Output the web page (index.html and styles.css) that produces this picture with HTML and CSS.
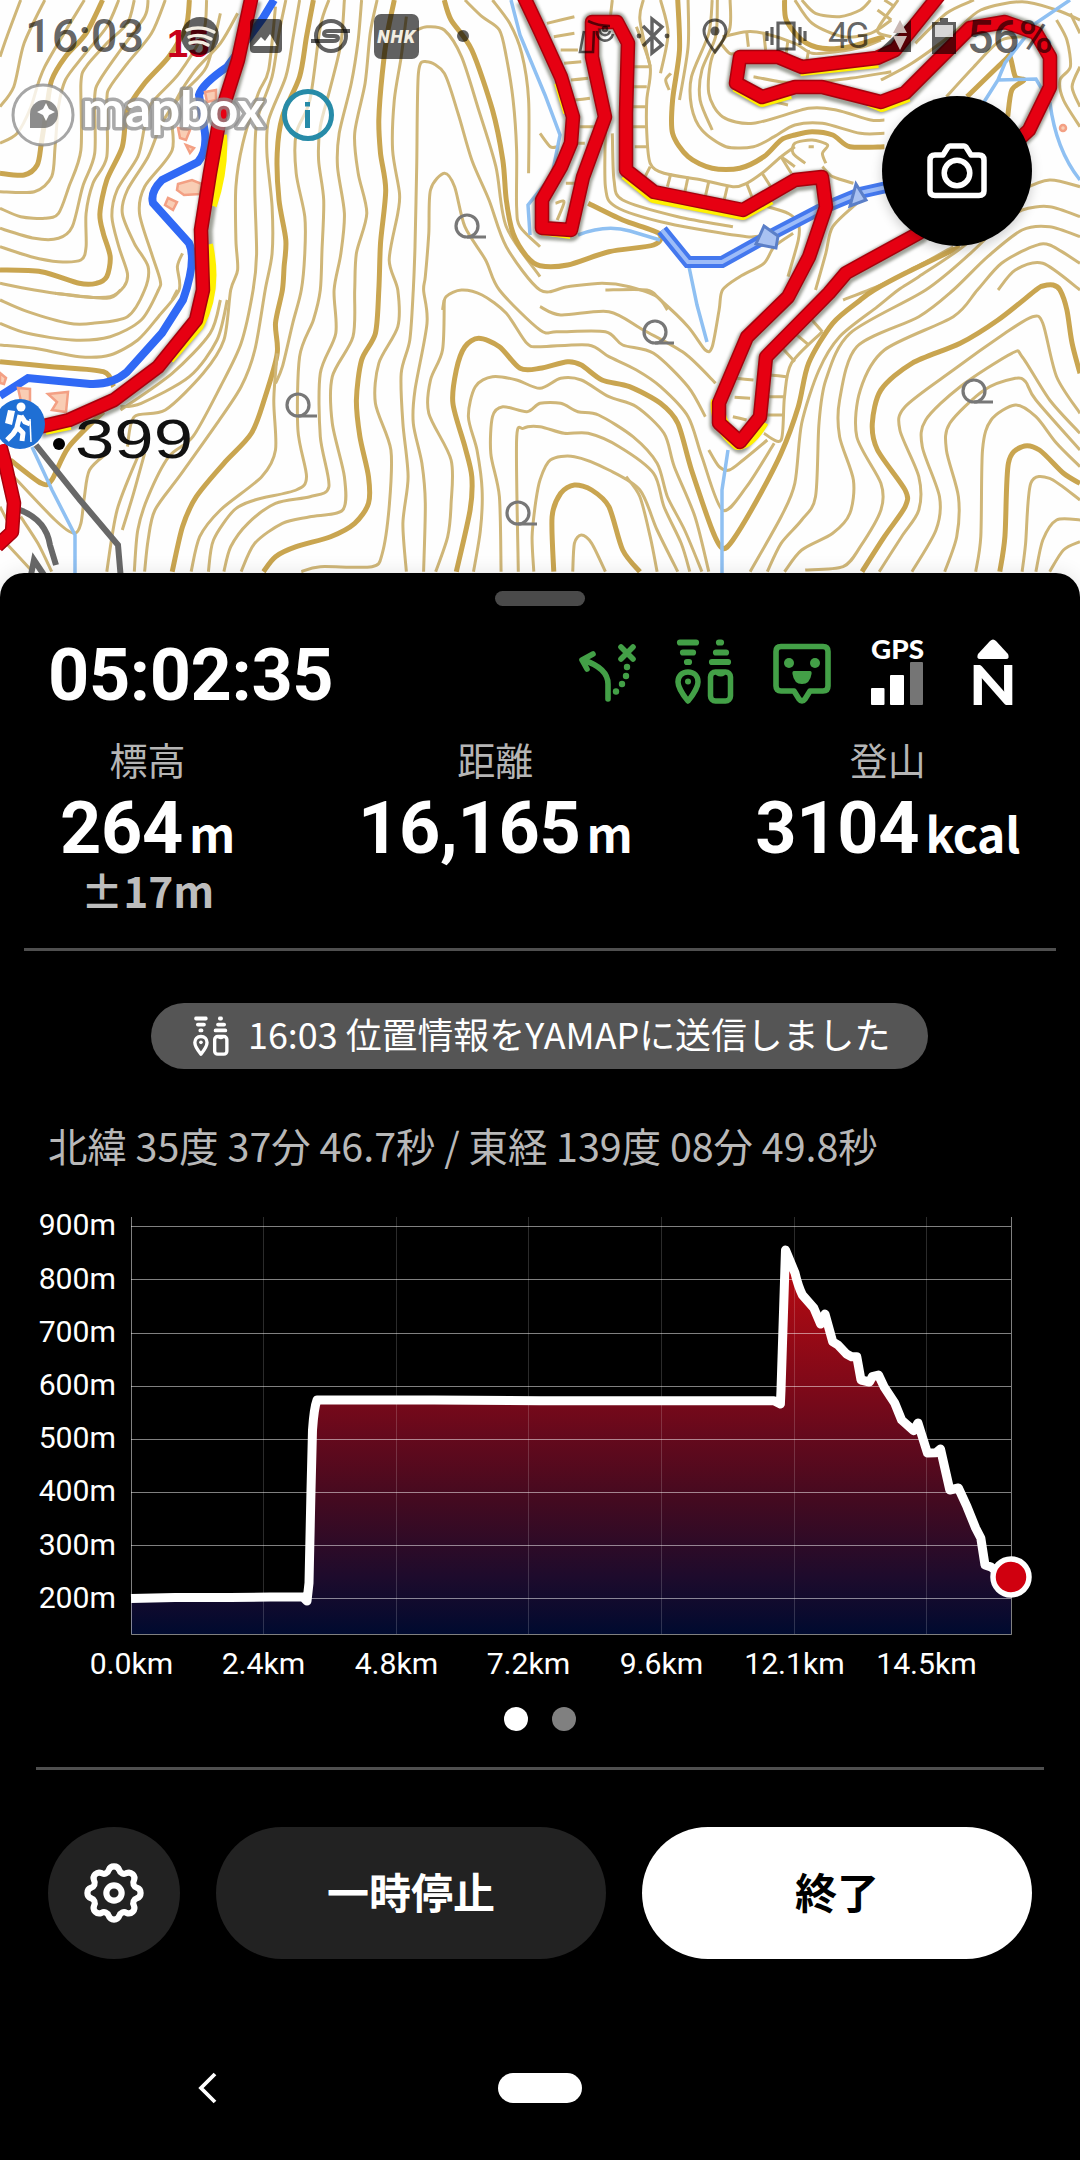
FILE: index.html
```html
<!doctype html>
<html lang="ja">
  <head>
    <meta charset="utf-8">
    <meta name="viewport" content="width=device-width, initial-scale=1.0">
    <title>YAMAP 活動中</title>
    <link rel="stylesheet" href="styles.css">
  </head>
  <body>
    <div class="app">
      <!-- Map -->
      <div class="map">
        <svg class="map-canvas" viewBox="0 0 1080 600">
          <g id="contours"></g>

          <!-- rivers -->
          <g class="stream">
            <path d="M511 0L520 35L545 95L560 135L552 175L528 205L530 235"></path>
            <path d="M578 235Q606 224 630 231L660 240"></path>
            <path d="M688 262L697 305L707 342"></path>
            <path d="M728 450L722 490V575"></path>
            <path d="M1070 0L1036 23L1005 63L998 80L984 102M998 80L1036 79L1050 103Q1056 150 1080 180"></path>
            <path d="M32 447L52 490L75 535V575"></path>
          </g>
          <path class="river" d="M274 0L263 18L227 67Q202 84 199 95L205 133Q207 152 198 162L162 180Q150 192 153 203L189 243Q197 260 183 300L162 333L127 372Q112 385 90 384L28 378L0 396"></path>
          <path class="river-wide" d="M662 230L688 262H722L767 237L819 210L860 193L900 184"></path>
          <path class="river-fill" d="M662 230L688 262H722L767 237L819 210L860 193L900 184"></path>
          <path class="river-gate" d="M764 226L778 236L776 248L756 244ZM856 184L866 200L850 206Z"></path>

          <!-- buildings -->
          <g class="building">
            <path d="M178 128L190 130L186 140L180 138ZM186 145L194 148L190 153ZM178 184L192 180L202 184L200 194L184 195L177 190ZM168 198L177 202L173 210L165 205ZM205 92L216 90V100L207 102Z"></path>
            <path d="M0 373L6 378L4 384L0 383ZM18 388L30 389V402L22 406ZM48 394L68 392L66 412L52 410L57 402Z"></path>
            <circle cx="1063" cy="128" r="3"></circle>
          </g>

          <!-- roads -->
          <path class="road" d="M36 445L80 500L118 545L121 580M20 510Q46 520 50 545L56 565M30 580L34 560L46 578"></path>

          <!-- trail casing -->
          <g class="casing">
            <path d="M252 0L238 60L221 120L212 173L203 230L205 285L197 322L158 369L114 402L69 422L40 429"></path>
            <path d="M525 0L540 33L561 79L573 119L571 145L561 169L542 202V230L571 232L583 179L605 119L592 57V22H617L628 43L626 113V172L654 194L743 212L795 182L822 179L826 209L809 259L788 299L747 339L719 405V425L740 444L760 419L766 359L829 295L846 275L919 235L1029 130L1050 87V57L1036 33L1005 22L970 28L905 95L881 104L822 89H795L762 99L736 85L740 59H778L802 69L877 60L895 52L936 0"></path>
          </g>
          <g class="yellow">
            <path d="M220 135Q222 170 210 205M206 245Q216 290 197 325L168 358M45 428L70 423"></path>
            <path d="M542 228L571 232M626 173L654 196L743 213L770 198M736 85L762 100L790 92M870 100L882 105L908 95M800 69L878 61M718 400Q715 424 738 443Q750 442 762 421M570 112L561 82"></path>
          </g>
          <g class="trail-edge">
            <path d="M252 -5L238 60L220 117L210 173L201 230L203 290L196 320L158 367L114 400L69 420L35 428"></path>
            <path d="M0 445L5 463L14 503L12 532L-3 546"></path>
            <path d="M523 -5L540 31L561 77L573 117L571 143L561 167L542 200V228L571 230L583 177L605 117L592 57V22H617L628 43L626 113V170L654 192L743 210L795 180L822 177L826 207L809 257L788 297L747 337L719 403V423L740 442L760 417L766 357L829 293L846 273L919 233L1029 130L1050 87V57L1036 33L1005 22L970 28L905 93L881 102L822 87H795L762 97L736 83L740 57H778L802 67L877 58L895 50L940 -6"></path>
          </g>
          <g class="trail">
            <path d="M252 -5L238 60L220 117L210 173L201 230L203 290L196 320L158 367L114 400L69 420L35 428"></path>
            <path d="M0 445L5 463L14 503L12 532L-3 546"></path>
            <path d="M523 -5L540 31L561 77L573 117L571 143L561 167L542 200V228L571 230L583 177L605 117L592 57V22H617L628 43L626 113V170L654 192L743 210L795 180L822 177L826 207L809 257L788 297L747 337L719 403V423L740 442L760 417L766 357L829 293L846 273L919 233L1029 130L1050 87V57L1036 33L1005 22L970 28L905 93L881 102L822 87H795L762 97L736 83L740 57H778L802 67L877 58L895 50L940 -6"></path>
          </g>

          <!-- broadleaf symbols -->
          <g class="tree">
            <path d="M467 237h19M298 416h19M518 524h19M655 343h19M974 402h19"></path>
            <circle cx="467" cy="226" r="11"></circle>
            <circle cx="298" cy="405" r="11"></circle>
            <circle cx="518" cy="513" r="11"></circle>
            <circle cx="655" cy="332" r="11"></circle>
            <circle cx="974" cy="391" r="11"></circle>
          </g>

          <circle cx="59" cy="444" r="6"></circle>
          <text class="spot" x="75" y="458" textLength="118" lengthAdjust="spacingAndGlyphs">399</text>
          <text class="day" x="167" y="57">15</text>

          <!-- trailhead marker -->
          <g transform="translate(20 424)">
            <circle r="25" fill="#1f6fd4"></circle>
            <circle cx="1" cy="-17" r="4.5" fill="#fff"></circle>
            <path d="M-12 -14L-5 -13L-8 1L-15 -1Z" fill="#fff"></path>
            <path d="M0 -9L-3 3L3 9L2 17M-3 4L-7 10L-13 16M1 -8L5 -2L10 0" fill="none" stroke="#fff" stroke-width="5" stroke-linejoin="round"></path>
            <path d="M10 -5L11 18" stroke="#fff" stroke-width="1.5"></path>
          </g>
        </svg>

        <!-- Status bar -->
        <div class="status-bar">
          <span class="clock">16:03</span>
          <svg class="st-music" width="38" height="40" viewBox="0 0 38 40">
            <circle cx="19" cy="20" r="19" fill="currentColor"></circle>
            <path d="M6 14Q19 9 33 16M8 21Q19 17 30 23M9 27Q19 24 27 29" fill="none" stroke="#f3eee2" stroke-width="3.4" stroke-linecap="round"></path>
          </svg>
          <svg class="st-photo" width="32" height="34" viewBox="0 0 32 34">
            <path fill="currentColor" fill-rule="evenodd" d="M4 0H28Q32 0 32 4V30Q32 34 28 34H4Q0 34 0 30V4Q0 0 4 0ZM3 27H27L20 15L15 22L11 18Z"></path>
          </svg>
          <svg class="st-s" width="40" height="34" viewBox="0 0 40 34">
            <g fill="none" stroke="currentColor" stroke-width="4">
              <circle cx="20" cy="17" r="15"></circle>
              <path d="M39 12H18Q13 12 13 15Q13 17 18 17H23Q27 17 27 19Q27 22 22 22H0"></path>
            </g>
          </svg>
          <span class="st-nhk">NHK</span>
          <span class="st-dot"></span>
          <svg class="st-cast" width="38" height="38" viewBox="0 0 38 38">
            <g fill="none" stroke="currentColor" stroke-width="2.6">
              <path d="M6 14L2 35H15L16 14M10 4Q20 9 32 9M19 14a8 8 0 0 0 16 3M22 12a5 5 0 0 0 10 2"></path>
              <circle cx="27" cy="12" r="2"></circle>
            </g>
          </svg>
          <svg class="st-bt" width="34" height="38" viewBox="0 0 34 38">
            <path d="M7 9L26 28L16 36V2L26 10L7 29" fill="none" stroke="currentColor" stroke-width="3.4"></path>
            <circle cx="3" cy="19" r="2.4" fill="currentColor"></circle>
            <circle cx="31" cy="19" r="2.4" fill="currentColor"></circle>
          </svg>
          <svg class="st-pin" width="26" height="36" viewBox="0 0 26 36">
            <path d="M13 2C6.500 2 2 7 2 13C2 21 13 34 13 34C13 34 24 21 24 13C24 7 19.500 2 13 2Z" fill="none" stroke="currentColor" stroke-width="3"></path>
            <circle cx="13" cy="13" r="4.500" fill="currentColor"></circle>
          </svg>
          <svg class="st-vib" width="42" height="30" viewBox="0 0 42 30">
            <path d="M13 2H29V28H13ZM2 10V20M7 6V24M35 6V24M40 10V20" fill="none" stroke="currentColor" stroke-width="3.200"></path>
          </svg>
          <span class="st-net">4G</span>
          <svg class="st-signal" width="34" height="32" viewBox="0 0 34 32">
            <path d="M34 0V32H0Z" fill="currentColor"></path>
            <path d="M23 0L30 13H16ZM23 30L30 16H16Z" fill="#c9b8b4"></path>
          </svg>
          <svg class="st-battery" width="24" height="36" viewBox="0 0 24 36">
            <path d="M8 0H16V4H24V36H0V4H8Z" fill="currentColor"></path>
            <path d="M3 7H21V19H3Z" fill="#fff" fill-opacity=".75"></path>
          </svg>
          <span class="percent">56%</span>
        </div>

        <!-- Attribution -->
        <div class="attribution">
          <svg width="255" height="66" viewBox="0 0 255 66">
            <circle cx="31" cy="33" r="30" fill="#fff" fill-opacity=".8" stroke="#888" stroke-opacity=".75" stroke-width="3"></circle>
            <path d="M18 46V32a14 14 0 1 1 15 14Z" fill="#666" fill-opacity=".75"></path>
            <path d="M34 21L37 27L43 30L37 33L34 39L31 33L25 30L31 27Z" fill="#fff"></path>
            <text class="logo-text" x="70" y="45" textLength="182" lengthAdjust="spacingAndGlyphs">mapbox</text>
          </svg>
          <svg class="info" width="52" height="52" viewBox="0 0 52 52">
            <circle cx="26" cy="26" r="23.500" fill="#fff" fill-opacity=".6" stroke="#278ba8" stroke-width="5"></circle>
            <path d="M23 13H28V17.500H23ZM23 21H28V39H23Z" fill="#278ba8"></path>
          </svg>
        </div>

        <button class="camera" aria-label="カメラ">
          <svg width="60" height="56" viewBox="0 0 60 56">
            <g fill="none" stroke="#fff" stroke-width="5.500" stroke-linejoin="round">
              <path d="M8 12H16L21 4Q22 3 23 3H37Q38 3 39 4L44 12H52Q57 12 57 17V48Q57 52.500 52 52.500H8Q3 52.500 3 48V17Q3 12 8 12Z"></path>
              <circle cx="30" cy="30" r="12.800"></circle>
            </g>
          </svg>
        </button>
      </div>

      <!-- Bottom sheet -->
      <div class="sheet">
        <div class="handle"></div>

        <div class="head">
          <div class="timer">05:02:35</div>
          <div class="indicators">
            <svg width="58" height="66" viewBox="0 0 58 66">
              <g fill="none" stroke="#43a047" stroke-width="5.600" stroke-linecap="round" stroke-linejoin="round">
                <path d="M29 60V45Q29 29 4 21M14 15L3 21L8 30M42 8L54 20M54 8L42 20"></path>
              </g>
              <g fill="#43a047"><circle cx="48" cy="28" r="3.200"></circle><circle cx="47" cy="37" r="3.200"></circle><circle cx="43" cy="45" r="3.200"></circle><circle cx="37" cy="52.500" r="3.200"></circle></g>
            </svg>
            <svg class="green" width="60" height="66" viewBox="0 0 60 66">
              <g id="send">
                <path d="M5 3.500H21M8 13.500H18M12 23H14M44 3.500H46M41 13.500H51M37 23H53" fill="none" stroke="currentColor" stroke-width="6.200" stroke-linecap="round"></path>
                <path d="M13 33C7 33 3 37 3 43C3 50 13 62 13 62C13 62 23 50 23 43C23 37 19 33 13 33Z" fill="none" stroke="currentColor" stroke-width="5.500" stroke-linejoin="round"></path>
                <circle cx="13" cy="42.500" r="3" fill="currentColor"></circle>
                <rect x="35.500" y="33" width="20" height="29" rx="5" fill="none" stroke="currentColor" stroke-width="5.500"></rect>
                <path d="M41 33H50V36Q46 39 41 36Z" fill="currentColor"></path>
              </g>
            </svg>
            <svg width="58" height="66" viewBox="0 0 58 66">
              <path d="M8 7.500H50Q55 7.500 55 12.500V47Q55 52 50 52H37L32 60Q29 64 26 60L21 52H8Q3 52 3 47V12.500Q3 7.500 8 7.500Z" fill="none" stroke="#43a047" stroke-width="5.600" stroke-linejoin="round"></path>
              <g fill="#43a047"><circle cx="16" cy="24" r="5"></circle><circle cx="42" cy="24" r="5"></circle><path d="M21 32H37Q39 32 38.500 35Q37 45 29 45Q21 45 19.500 35Q19 32 21 32Z"></path></g>
            </svg>
            <svg width="54" height="66" viewBox="0 0 54 66">
              <text class="gps" x="0" y="19.500" textLength="53" lengthAdjust="spacingAndGlyphs">GPS</text>
              <rect x="0" y="49" width="13.500" height="17" rx="1" fill="#fff"></rect>
              <rect x="19" y="36" width="14" height="30" rx="1" fill="#fff"></rect>
              <rect x="39" y="23" width="13" height="43" rx="1" fill="#757575"></rect>
            </svg>
            <svg width="42" height="66" viewBox="0 0 42 66">
              <path d="M18 2Q21 -1 24 2L36 15Q38 20 34 20H8Q4 20 6 15Z" fill="#fff"></path>
              <text class="north" x="-3" y="65.500" textLength="48" lengthAdjust="spacingAndGlyphs">N</text>
            </svg>
          </div>
        </div>

        <div class="stats">
          <div class="stat">
            <div class="label">標高</div>
            <div class="value">264<span>m</span></div>
            <div class="error">±17m</div>
          </div>
          <div class="stat">
            <div class="label">距離</div>
            <div class="value">16,165<span>m</span></div>
          </div>
          <div class="stat">
            <div class="label">登山</div>
            <div class="value">3104<span>kcal</span></div>
          </div>
        </div>

        <div class="divider wide"></div>

        <div class="notice">
          <svg width="36" height="41" viewBox="0 0 59 66"><use href="#send" stroke-width="7"></use></svg>
          <span>16:03 位置情報をYAMAPに送信しました</span>
        </div>

        <div class="coords">北緯 35度 37分 46.7秒 / 東経 139度 08分 49.8秒</div>

        <!-- Elevation chart -->
        <svg class="chart" viewBox="0 1200 1080 490">
          <defs>
            <linearGradient id="elev" gradientUnits="userSpaceOnUse" x1="0" y1="1250" x2="0" y2="1634">
              <stop offset="0" stop-color="#c00a10"></stop>
              <stop offset=".4" stop-color="#76091a"></stop>
              <stop offset=".65" stop-color="#440a20"></stop>
              <stop offset=".85" stop-color="#1e0b2c"></stop>
              <stop offset="1" stop-color="#000a2f"></stop>
            </linearGradient>
          </defs>
          <path fill="url(#elev)" d="M131 1599L306 1597L309 1583L311 1490L312.500 1430L316 1400H774L781 1395L785.500 1250L795 1273L802.400 1295L813.800 1308L820.600 1324L825 1314L832.700 1341L838 1345L846.500 1354L856.800 1357L861 1380L869.500 1382L878.500 1375L884 1387L894.700 1403L901.600 1420L913.600 1431L918 1423L927.400 1453L940.500 1449L949.800 1490L958.400 1488L967 1507L975.600 1528L980.800 1538L985 1565L1011 1577V1634H131Z"></path>
          <path class="grid-v" d="M263.500 1217V1634M396.500 1217V1634M528.500 1217V1634M661.500 1217V1634M794.500 1217V1634M926.500 1217V1634"></path>
          <path class="grid-h" d="M131 1226.500H1011M131 1279.500H1011M131 1333.500H1011M131 1386.500H1011M131 1439.500H1011M131 1492.500H1011M131 1545.500H1011M131 1598.500H1011M131.500 1217V1634.500H1011.500V1217"></path>
          <path class="line" d="M131 1598.500L175 1597.500L230 1597.500L270 1597L303 1597L307 1601L309 1583L311 1490L312.500 1430Q314 1408 317 1400H434L540 1400.700H774L780.400 1404L781 1390L785.500 1250L795 1273Q798 1286 802.400 1295L813.800 1308L820.600 1324L825 1314L832.700 1341.700L838 1345L846.500 1354L851.600 1356.700H856.800L861 1380L869.500 1382L872.300 1376.700L878.500 1375L884 1386.700L894.700 1403L901.600 1420L913.600 1430.700L918 1423L927.400 1453L936 1452.700L940.500 1449L949.800 1490L958.400 1488L967 1506.700L975.600 1528L980.800 1538L985 1565L991 1567L1001.400 1575L1011 1577"></path>
          <circle cx="1011" cy="1577" r="18" fill="#d0000f" stroke="#fff" stroke-width="5.500"></circle>
          <g class="y-labels">
            <text x="116" y="1235">900m</text>
            <text x="116" y="1289">800m</text>
            <text x="116" y="1342">700m</text>
            <text x="116" y="1395">600m</text>
            <text x="116" y="1448">500m</text>
            <text x="116" y="1501">400m</text>
            <text x="116" y="1555">300m</text>
            <text x="116" y="1608">200m</text>
          </g>
          <g class="x-labels">
            <text x="131.500" y="1674">0.0km</text>
            <text x="263.500" y="1674">2.4km</text>
            <text x="396.500" y="1674">4.8km</text>
            <text x="528.500" y="1674">7.2km</text>
            <text x="661.500" y="1674">9.6km</text>
            <text x="794.500" y="1674">12.1km</text>
            <text x="926.500" y="1674">14.5km</text>
          </g>
        </svg>

        <div class="pager">
          <span class="dot active"></span>
          <span class="dot"></span>
        </div>

        <div class="divider"></div>

        <div class="actions">
          <button class="btn settings" aria-label="設定">
            <svg width="68" height="68" viewBox="-32 -32 64 64">
              <g fill="none" stroke="#fff" stroke-width="5.800" stroke-linejoin="round">
                <path d="M-5 -21.500A5.300 5.300 0 0 1 5 -21.500A4.600 4.600 0 0 0 11.700 -18.700A5.300 5.300 0 0 1 18.700 -11.700A4.600 4.600 0 0 0 21.500 -5A5.300 5.300 0 0 1 21.500 5A4.600 4.600 0 0 0 18.700 11.700A5.300 5.300 0 0 1 11.700 18.700A4.600 4.600 0 0 0 5 21.500A5.300 5.300 0 0 1 -5 21.500A4.600 4.600 0 0 0 -11.700 18.700A5.300 5.300 0 0 1 -18.700 11.700A4.600 4.600 0 0 0 -21.500 5A5.300 5.300 0 0 1 -21.500 -5A4.600 4.600 0 0 0 -18.700 -11.700A5.300 5.300 0 0 1 -11.700 -18.700A4.600 4.600 0 0 0 -5 -21.500Z"></path>
                <circle r="7.200"></circle>
              </g>
            </svg>
          </button>
          <button class="btn pause">一時停止</button>
          <button class="btn finish">終了</button>
        </div>

        <!-- System navigation -->
        <div class="nav-bar">
          <svg width="20" height="32" viewBox="0 0 20 32">
            <path d="M17 2L3 16L17 30" fill="none" stroke="#fff" stroke-width="3.800"></path>
          </svg>
          <span class="home"></span>
        </div>
      </div>
    </div>

    <script src="map.js"></script>
  </body>
</html>
```

FILE: styles.css
```css
* {
  margin: 0;
  padding: 0;
  box-sizing: border-box;
}

body {
  background: #000;
  color: #fff;
  font-family: Roboto, 'Noto Sans CJK JP', sans-serif;
}

svg {
  display: block;
  flex-shrink: 0;
  overflow: visible;
}

button {
  border: none;
  font-family: inherit;
}

.app {
  width: 1080px;
  height: 2160px;
  overflow: hidden;
}

/* Map */
.map {
  position: relative;
  height: 573px;
  background: #fefefe;
}

.map-canvas {
  width: 1080px;
  height: 600px;
  background: #fefefe;
  overflow: hidden;
}

.contour {
  fill: none;
  stroke: #cfb678;
  stroke-width: 3;
}

.contour.index {
  stroke: #c9a550;
  stroke-width: 5;
}

.stream {
  fill: none;
  stroke: #8fc0f2;
  stroke-width: 3.5;
}

.river {
  fill: none;
  stroke: #3069f5;
  stroke-width: 8;
}

.river-wide {
  fill: none;
  stroke: #4478ee;
  stroke-width: 12;
}

.river-fill {
  fill: none;
  stroke: #9dbcf8;
  stroke-width: 4;
}

.river-gate {
  fill: #a9c2f2;
  stroke: #5b7fc8;
  stroke-width: 3;
}

.building {
  fill: #f9cdb4;
  stroke: #f3a084;
  stroke-width: 2.5;
}

.road {
  fill: none;
  stroke: #686868;
  stroke-width: 6;
}

.casing,
.yellow,
.trail,
.trail-edge {
  fill: none;
  stroke-linejoin: round;
}

.casing {
  stroke: #5f6455;
  stroke-opacity: .6;
  stroke-width: 19;
  filter: blur(1.5px);
}

.yellow {
  stroke: #fff000;
  stroke-width: 14;
}

.trail-edge {
  stroke: #a8000c;
  stroke-width: 14.5;
}

.trail {
  stroke: #e60012;
  stroke-width: 11.5;
}

.tree {
  fill: none;
  stroke: #777;
  stroke-width: 3.2;
}

.spot {
  font: 56px 'Liberation Sans', sans-serif;
  fill: #111;
}

.day {
  font: bold 38px 'Liberation Sans', sans-serif;
  fill: #c8001a;
}

/* Status bar */
.status-bar {
  position: absolute;
  top: 0;
  left: 0;
  width: 1080px;
  height: 72px;
  padding-left: 25px;
  display: flex;
  align-items: center;
  color: rgba(0, 0, 0, .62);
}

.clock {
  width: 156px;
  font-size: 47px;
  font-weight: 500;
  line-height: 72px;
}

.st-photo {
  margin-left: 31px;
}

.st-s {
  margin-left: 29px;
}

.st-nhk {
  margin-left: 23px;
  width: 45px;
  height: 45px;
  border-radius: 7px;
  background: rgba(0, 0, 0, .62);
  color: #f3eee2;
  font: italic 900 18px/45px Roboto, sans-serif;
  letter-spacing: 1px;
  text-align: center;
}

.st-dot {
  margin-left: 38px;
  width: 12px;
  height: 12px;
  border-radius: 50%;
  background: currentColor;
}

.st-cast {
  margin-left: 109px;
}

.st-bt {
  margin-left: 20px;
}

.st-pin {
  margin-left: 32px;
}

.st-vib {
  margin-left: 37px;
}

.st-net {
  width: 48px;
  margin-left: 21px;
  font-size: 36px;
  letter-spacing: -3px;
}

.st-signal {
  margin-left: 1px;
}

.st-battery {
  margin-left: 21px;
}

.percent {
  margin-left: 11px;
  font-size: 47px;
  font-weight: 500;
  letter-spacing: -1px;
}

.attribution {
  position: absolute;
  top: 82px;
  left: 12px;
  display: flex;
  align-items: center;
  gap: 15px;
}

.logo-text {
  font: bold 50px Lato, sans-serif;
  fill: #fff;
  stroke: #8c8c8c;
  stroke-opacity: .75;
  stroke-width: 7;
  stroke-linejoin: round;
  paint-order: stroke;
}

.camera {
  position: absolute;
  top: 96px;
  left: 882px;
  width: 150px;
  height: 150px;
  border-radius: 50%;
  background: #000;
  box-shadow: 0 4px 12px rgba(0, 0, 0, .2);
  display: flex;
  align-items: center;
  justify-content: center;
}

/* Bottom sheet */
.sheet {
  position: relative;
  height: 1587px;
  padding-top: 18px;
  border-radius: 24px 24px 0 0;
  background: #000;
  box-shadow: 0 0 20px rgba(0, 0, 0, .1);
}

.handle {
  width: 90px;
  height: 15px;
  margin: 0 auto;
  border-radius: 8px;
  background: #4a4a4a;
}

.head {
  height: 72px;
  margin-top: 33px;
  padding: 0 66px 0 48px;
  display: flex;
  justify-content: space-between;
}

.timer {
  font-size: 72px;
  font-weight: 700;
  letter-spacing: -.4px;
  line-height: 73px;
}

.indicators {
  display: flex;
  gap: 38px;
}

.indicators svg:nth-child(4) {
  margin-left: 2px;
}

.indicators svg:nth-child(5) {
  margin-left: 9px;
}

.green {
  color: #43a047;
}

.gps {
  font: 900 27px Lato, sans-serif;
  fill: #fff;
}

.north {
  font: 900 56px Lato, sans-serif;
  fill: #fff;
}

.stats {
  height: 211px;
  margin-top: 26px;
  padding: 0 60px;
  display: flex;
  justify-content: space-between;
}

.stat {
  text-align: center;
}

.label {
  color: #b5b5b5;
  font: 38px/44px 'Noto Sans CJK JP', sans-serif;
}

.value {
  margin-top: 11px;
  display: flex;
  align-items: baseline;
  gap: 6px;
  font-size: 72px;
  font-weight: 700;
  letter-spacing: -.3px;
  line-height: 73px;
}

.value span {
  font: bold 48px/48px 'Noto Sans CJK JP', sans-serif;
}

.error {
  color: #bdbdbd;
  font: bold 42.5px/50px 'Noto Sans CJK JP', sans-serif;
}

.divider {
  height: 3px;
  margin: 36px 36px 0;
  background: #4f4f4f;
}

.divider.wide {
  margin: 0 24px;
}

.notice {
  width: 777px;
  height: 66px;
  margin: 52px 0 0 151px;
  padding-left: 42px;
  display: flex;
  align-items: center;
  gap: 19px;
  border-radius: 33px;
  background: #555;
  font: 35.9px/58px 'Noto Sans CJK JP', sans-serif;
  white-space: nowrap;
}

.notice span {
  padding-bottom: 7px;
}

.coords {
  margin: 51px 48px 0;
  color: #b8b8b8;
  font: 39.4px/50px 'Noto Sans CJK JP', sans-serif;
  white-space: nowrap;
}

.chart {
  width: 1080px;
  height: 490px;
  margin-top: 30px;
}

.grid-v {
  fill: none;
  stroke: #fff;
  stroke-opacity: .17;
}

.grid-h {
  fill: none;
  stroke: #fff;
  stroke-opacity: .5;
}

.line {
  fill: none;
  stroke: #fff;
  stroke-width: 9;
  stroke-linejoin: round;
}

.chart text {
  font-size: 30.2px;
  fill: #fff;
}

.y-labels {
  text-anchor: end;
}

.x-labels {
  text-anchor: middle;
}

.pager {
  margin-top: 17px;
  display: flex;
  justify-content: center;
  gap: 24px;
}

.dot {
  width: 24px;
  height: 24px;
  border-radius: 50%;
  background: #808080;
}

.dot.active {
  background: #fff;
}

.actions {
  margin-top: 57px;
  padding: 0 48px;
  display: flex;
  gap: 36px;
}

.btn {
  flex: 1;
  height: 132px;
  padding-bottom: 4px;
  border-radius: 66px;
  background: #222;
  color: #fff;
  font: bold 42px/60px 'Noto Sans CJK JP', sans-serif;
}

.btn.settings {
  flex: 0 0 132px;
  padding: 0;
  display: flex;
  align-items: center;
  justify-content: center;
}

.btn.finish {
  background: #fff;
  color: #000;
}

.nav-bar {
  height: 32px;
  margin-top: 113px;
  padding-left: 198px;
  display: flex;
  align-items: center;
  gap: 280px;
}

.home {
  width: 84px;
  height: 30px;
  border-radius: 15px;
  background: #fff;
}
```

FILE: map.js
```js
// Contour lines, one list per map tile. A leading "!" marks an index contour.
const tiles = [
  { x: 0, y: 0, lines: [
    '60,0 20,110 0,170', '130,0 70,130 40,260 0,320', '!298,0 250,100 190,170 150,240 135,330 120,430 108,495 70,525 0,520',
    '245,0 130,200 90,320 50,400 0,430', '345,0 310,80 240,170 190,240 170,320 160,440 150,530 100,575 0,575',
    '390,0 370,70 310,130 250,200 235,250 235,450 200,560 170,640 130,655 60,650 0,625',
    '430,0 420,50 350,150 290,240 275,290 275,460 240,560 210,680 170,715 100,715 0,685',
    '480,0 440,100 370,190 320,260 310,300 310,470 270,550 250,640 250,740 235,780 170,785 90,770 0,740',
    '!550,0 540,80 490,170 420,250 370,330 355,440 310,540 290,640 300,700 320,770 310,830 280,850 230,850 120,815 0,810',
    '600,0 590,100 520,220 440,310 420,380 400,470 340,570 325,650 345,740 370,820 360,860 320,890 240,890 100,870 0,850',
    '640,40 600,200 530,280 470,370 430,470 370,570 355,640 390,730 430,800 420,870',
    '690,40 640,130 560,220 500,330 500,450 420,560 405,640 440,760 465,840 460,870', '530,760 515,800 520,870',
    '800,20 780,210 750,280 705,430 685,560 685,720 690,810 670,870', '830,0 810,100 790,230 745,370 740,560 745,760 735,870',
    '870,0 850,120 830,230 780,360 775,460 790,620 790,760 770,870', '!910,0 890,110 870,230 820,350 805,460 810,600 830,720 825,800 820,870',
    '955,0 930,80 900,300 860,400 860,520 885,650 885,760 875,870', '1000,0 990,130 960,260 930,380 925,480 940,600 935,750 930,870',
    '1050,0 1040,120 1020,250 985,400 980,500 1000,640 990,760 970,870', '1095,0 1075,100 1060,250 1030,400 1040,520 1065,640 1035,760 1030,870',
    '!1145,0 1125,100 1110,220 1100,360 1105,460 1120,570 1105,730 1100,870', '1180,50 1165,170 1145,300 1140,450 1160,580 1155,640 1130,780 1155,870',
    '1200,870 1205,740 1210,500 1215,220 1240,185 1290,220 1330,340 1370,480 1420,600 1470,740 1568,880',
    '1210,90 1240,80 1290,90 1340,170 1390,330 1440,500 1470,680 1568,830',
    '1230,870 1235,830 1245,700 1250,570 1290,520 1320,560 1350,680 1410,780 1450,870',
    '!1290,0 1310,60 1370,150 1430,330 1460,480 1470,600 1490,700 1530,770 1568,795',
    '1350,0 1400,50 1450,90 1470,170 1490,300 1500,450 1500,620 1510,680 1568,740', '1430,0 1480,70 1515,160 1535,300 1535,520'
  ] },
  { x: 540, y: 0, lines: [
    '210,0 205,45', '300,0 290,60 320,200', '280,80 320,200 310,300 310,400 320,490 360,520 470,540 560,560 600,550 650,515 700,470 740,440',
    '270,200 320,200', '270,260 310,260', '270,320 310,320', '270,380 310,380', '275,440 315,440', '320,500 300,540', '380,520 370,560', '430,530 420,580',
    '490,545 480,590', '545,555 535,600', '600,550 615,590', '645,520 670,560', '700,470 730,520',
    '20,70 100,50', '40,110 100,100', '60,150 110,150', '70,190 120,185', '90,240 140,235', '100,300 145,295', '115,380 160,380', '110,430 130,430', '75,550 110,550', '45,610 70,605 50,660',
    '!400,0 405,150 385,300 385,400 430,470 500,505 580,505 650,470 700,420 740,405 790,395 850,405 900,440 1000,440',
    '350,0 372,100 350,220', '380,220 365,240 375,270', '430,0 430,140 405,300', '500,0 490,100 440,230 440,320 470,390 540,440 620,440 680,410 740,375 820,370 930,400 1000,400',
    '552,0 550,90 500,170 490,280 530,350 620,370 780,325 860,330 960,360 1000,360', '515,0 510,110 470,210 465,300 500,390',
    '530,110 600,95 650,100 740,130 790,160 860,155 940,140 990,120', '525,130 550,160 570,160', '600,95 605,140', '650,100 655,150', '720,120 715,160', '780,150 775,180',
    '740,0 790,70 880,110 960,100 1020,60', '760,0 800,40 870,50 930,30 960,0', '!710,0 715,60 760,120 820,145 900,140 1000,110',
    '1040,0 980,90 1020,110', '980,30 1020,60', '1000,0 1030,20', '620,290 720,315', '620,230 740,250 900,235 1020,215',
    '990,240 1080,190 1200,100 1280,30 1400,5 1500,30 1568,60', '1090,130 1180,40 1260,0', '1080,90 1130,30 1160,0',
    '1180,290 1260,200 1340,120 1430,110', '!1240,290 1350,180 1365,170 1380,230 1405,240 1370,270 1358,350',
    '1500,60 1530,120 1540,200 1510,240 1520,300 1568,380', '1540,40 1568,100', '1568,200 1545,260 1568,320',
    '830,490 820,460 835,435 790,420 740,430 735,460 770,490', '700,470 740,500', '780,440 795,440',
    '190,380 190,560 220,620 370,670 600,710 660,700', '210,400 215,540 240,600 400,650 560,680',
    '!140,610 240,660 345,700 330,735 200,755 80,795 0,800', '0,860 80,860 180,850 260,860 340,890 370,930',
    '530,870 580,830 650,790 680,740 735,700', '800,870 830,760 850,680 920,610', '820,500 850,530 910,550', '660,620 720,640 750,670 750,720 720,830',
    '880,900 1000,850 1130,780 1200,740', '!970,870 1060,820 1220,740', '1040,870 1100,830 1240,730 1330,620 1400,570 1480,540 1568,560',
    '1120,870 1250,760 1330,680 1400,630 1480,620 1568,650', '1200,870 1300,770 1400,690 1480,680 1568,710',
    '1270,870 1340,790 1430,740 1480,735 1568,790', '1330,870 1380,810 1460,790 1568,870', '!1440,870 1460,858 1490,855 1510,870',
    '0,400 30,440 50,440'
  ] },
  { x: 0, y: 290, lines: [
    '160,10 310,25 350,0', '0,30 80,65 200,100 270,100 370,80 420,0', '0,100 80,130 210,150 320,140 410,90 460,0',
    '0,165 100,175 230,200 320,195 400,150 460,80 520,0', '!0,215 150,230 300,245 330,290', '515,0 500,30',
    '640,30 610,130 500,250 350,360', '660,30 630,150 550,260 410,340 350,350', '670,0 650,150 590,250 480,360 390,380 370,470',
    '735,0 700,160 640,290 560,440 490,500 430,620 400,720 390,845', '770,0 740,180 700,290 630,400 520,560 450,660 430,750 420,845',
    '!820,0 800,100 805,190 770,320 730,430 650,520 570,620 530,710 500,845', '805,190 795,330 800,480 760,560 640,660 580,740 555,845',
    '875,0 850,100 820,230 800,280', '930,0 910,90 870,200 865,420 890,560 860,600 740,630 680,660 620,750 605,845',
    '970,0 975,130 930,250 930,440 955,590 900,620 800,640 720,700 670,770 650,845', '1030,0 1025,140 965,260 965,400 1000,560 995,660 900,680 820,700 740,760 700,845',
    '!1100,0 1090,130 1050,210 1035,330 1045,440 1070,560 1070,640 1030,700 960,740 860,770 800,800 765,845',
    '1155,0 1155,110 1100,220 1090,340 1135,480 1130,650 1110,790 1080,830 930,830 875,845', '1200,0 1190,150 1165,250 1170,400 1185,560 1170,700 1180,845',
    '1230,0 1240,100 1205,300 1200,400 1225,520 1235,640 1230,845', '1290,30 1285,180 1250,270 1245,370 1310,510 1310,640 1300,740 1265,845',
    '1285,60 1295,20 1340,0 1400,15 1470,70 1530,160 1568,170', '!1568,235 1510,235 1450,170 1390,145 1350,170 1325,240 1315,340 1350,470 1370,560 1365,660 1325,845',
    '1568,295 1500,270 1430,260 1380,290 1360,380 1385,480 1400,600 1395,720 1375,845', '1568,340 1530,365 1460,350 1430,380 1425,490 1450,620 1455,845',
    '1568,410 1520,415 1500,450 1505,845', '1568,570 1555,640 1545,740 1550,845', '1450,0 1568,120',
    '!300,365 200,470 150,570 120,580 30,510', '310,490 260,540 245,620 235,700 215,730 160,690 40,560', '400,500 340,660 310,845', '420,490 385,620 355,720',
    '60,680 110,760 150,845', '0,740 90,840', '0,650 20,690'
  ] },
  { x: 540, y: 290, lines: [
    '190,0 310,0 350,30 430,110 480,180 500,170 520,60 530,0', '0,50 60,75 200,65 300,120 420,190 510,280', '0,120 50,125 190,125 240,165 330,190 430,290 480,380',
    '0,170 140,165 200,200 280,240 350,290 430,380 470,500 530,660 600,590 680,460',
    '!0,235 80,215 120,225 180,270 260,290 350,340 400,400 440,540 500,720 530,775 560,750 630,630 700,490 750,350 780,220 850,100 930,30 970,0',
    '0,295 60,265 120,270 200,320 280,350 360,430 390,530 450,680 490,845', '0,340 60,340 110,365 170,375 270,440 340,520 370,620 420,720 470,845',
    '0,410 70,430 140,430 230,470 330,550 360,650 410,760 435,845', '0,570 30,510 100,500 200,540 290,600 340,720 400,845', '250,560 290,620 320,740 340,845',
    '!40,845 35,680 60,610 100,585 150,600 200,650 240,780 290,845', '95,845 100,760 120,735 150,760 190,845',
    '490,480 520,530 550,540 590,510 660,450', '1040,0 980,50 870,140 810,240 760,400 740,580 700,680 610,845',
    '1120,0 900,130 830,270 810,400 800,620 760,690 700,760 660,845', '1200,0 1100,80 920,170 870,330 870,440 910,570 900,670 850,730 760,780 710,845',
    '1270,0 1200,80 1000,180 930,300 920,440 990,580 990,660 930,770 880,830 770,840',
    '!1568,250 1545,160 1530,60 1510,0', '!1440,0 1330,90 1220,160 1080,220 990,300 965,400 980,480 1060,600 1060,650 1000,740 935,845',
    '1568,370 1500,260 1460,100 1430,80 1350,130 1200,240 1060,350 1045,420 1100,560 1100,660 1050,740 985,845',
    '1568,430 1480,330 1400,200 1370,190 1220,290 1120,390 1110,470 1160,620 1150,720 1080,845',
    '1568,480 1440,330 1410,275 1380,265 1290,300 1190,400 1180,480 1215,620 1210,740 1175,845', '1568,530 1500,460 1440,380 1380,345 1310,390 1285,480 1280,740 1265,845',
    '!1568,580 1520,550 1450,480 1400,470 1360,520 1350,740 1335,845', '1568,630 1480,565 1425,580 1410,760 1400,845', '1568,690 1500,690 1460,750 1440,845', '1568,755 1520,780 1480,845',
    '820,125 730,220 710,320 700,450 650,430', '790,90 820,125', '740,130 780,165', '700,170 740,215', '665,255 715,260', '660,320 710,320', '650,375 705,375', '570,265 620,270', '565,322 610,325', '560,380 600,390'
  ] }
];

const SX = 540 / 1568;
const SY = 1 / 3;

// Catmull-Rom through the points
function smooth(p) {
  let d = `M${p[0][0]} ${p[0][1]}`;
  for (let i = 0; i < p.length - 1; i++) {
    const a = p[i - 1] || p[i], b = p[i], c = p[i + 1], e = p[i + 2] || c;
    const n = [b[0] + (c[0] - a[0]) / 7, b[1] + (c[1] - a[1]) / 7,
      c[0] - (e[0] - b[0]) / 7, c[1] - (e[1] - b[1]) / 7, c[0], c[1]];
    d += 'C' + n.map(v => v.toFixed(1)).join(' ');
  }
  return d;
}

const lines = [];
tiles.forEach((tile, t) => {
  tile.lines.forEach(line => {
    lines.push({
      tile: t,
      index: line[0] === '!',
      points: line.replace('!', '').split(' ').map(pair => {
        const [x, y] = pair.split(',').map(Number);
        return [tile.x + x * SX, tile.y + y * SY];
      })
    });
  });
});

const onSeam = p => Math.abs(p[1] - 290) < 0.5 || Math.abs(p[0] - 540) < 0.5;

// Connect a contour to its continuation in the next tile
function joinOne() {
  let best = null;
  for (let i = 0; i < lines.length; i++) {
    for (let j = i + 1; j < lines.length; j++) {
      const a = lines[i], b = lines[j];
      if (a.index !== b.index || a.tile === b.tile) continue;
      for (const ra of [false, true]) {
        for (const rb of [false, true]) {
          const p = ra ? a.points[0] : a.points[a.points.length - 1];
          const q = rb ? b.points[b.points.length - 1] : b.points[0];
          const dist = Math.hypot(p[0] - q[0], p[1] - q[1]);
          if (onSeam(p) && onSeam(q) && dist < 11 && (!best || dist < best.dist)) {
            best = { i, j, ra, rb, dist };
          }
        }
      }
    }
  }
  if (!best) return false;
  const a = lines[best.i], b = lines[best.j];
  const pa = best.ra ? a.points.slice().reverse() : a.points.slice();
  const pb = best.rb ? b.points.slice().reverse() : b.points.slice();
  const p = pa.pop(), q = pb.shift();
  a.points = [...pa, [(p[0] + q[0]) / 2, (p[1] + q[1]) / 2], ...pb];
  a.tile = -1 - best.i;
  lines.splice(best.j, 1);
  return true;
}

while (joinOne());

const group = document.getElementById('contours');
lines.forEach(line => {
  const path = document.createElementNS('http://www.w3.org/2000/svg', 'path');
  path.setAttribute('class', line.index ? 'contour index' : 'contour');
  path.setAttribute('d', smooth(line.points));
  group.appendChild(path);
});
```
